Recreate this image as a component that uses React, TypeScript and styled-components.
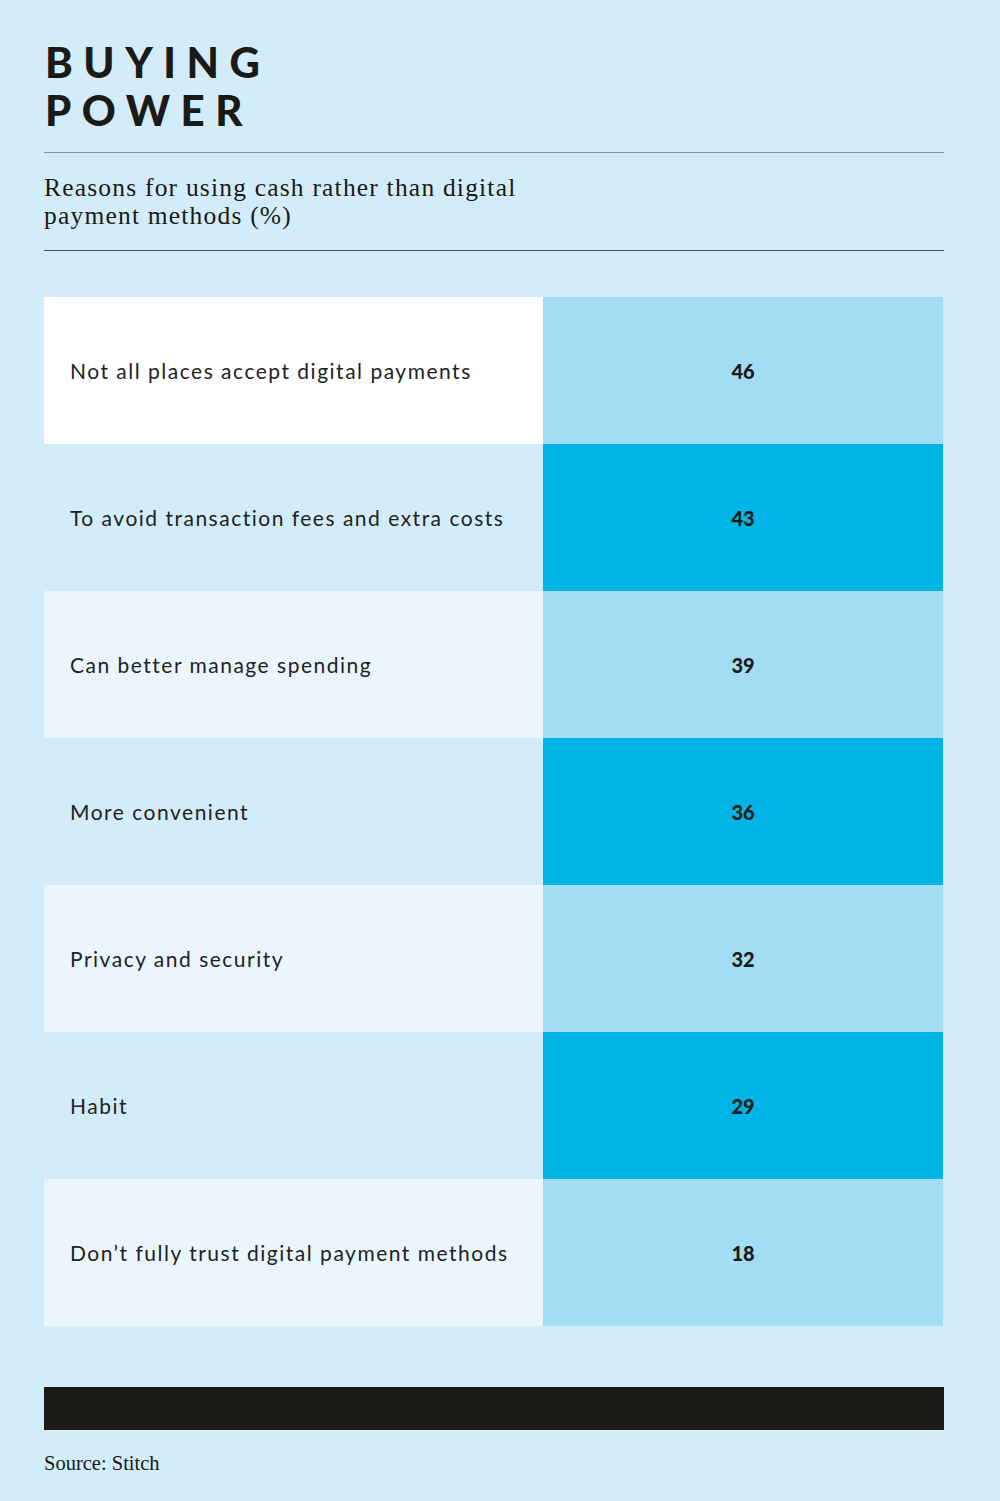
import React from 'react';
import styled, { createGlobalStyle } from 'styled-components';

const GlobalStyle = createGlobalStyle`
  html, body {
    margin: 0;
    padding: 0;
    background: #d2edf9;
  }
`;

const rows = [
  { label: 'Not all places accept digital payments', value: 46 },
  { label: 'To avoid transaction fees and extra costs', value: 43 },
  { label: 'Can better manage spending', value: 39 },
  { label: 'More convenient', value: 36 },
  { label: 'Privacy and security', value: 32 },
  { label: 'Habit', value: 29 },
  { label: 'Don’t fully trust digital payment methods', value: 18 },
];

const labelShades = ['#ffffff', '#d2edf9', '#eaf6fc', '#d2edf9', '#eaf6fc', '#d2edf9', '#eaf6fc'];

const Page = styled.div`
  width: 1000px;
  height: 1501px;
  box-sizing: border-box;
  padding: 38px 56px 0 44px;
  background: #d2edf9;
  color: #1a1a16;
`;

const Title = styled.h1`
  margin: 0 0 18px 1px;
  font-family: 'Lato', sans-serif;
  font-weight: 900;
  font-size: 42px;
  line-height: 48px;
  letter-spacing: 10.5px;
  text-transform: uppercase;
`;

const Rule = styled.hr<{ $dark?: boolean }>`
  margin: 0;
  border: 0;
  height: 1px;
  background: ${(p) => (p.$dark ? '#4a4f52' : '#8a9094')};
`;

const Subtitle = styled.p`
  margin: 0;
  padding: 21px 0 20px;
  font-family: 'Liberation Serif', serif;
  font-size: 25.5px;
  line-height: 28px;
  letter-spacing: 1.2px;
  max-width: 500px;
`;

const Table = styled.div`
  margin-top: 46px;
  display: grid;
  grid-template-columns: 499px 400px;
`;

const Label = styled.div<{ $shade: string }>`
  height: 147px;
  display: flex;
  align-items: center;
  padding-left: 26px;
  background: ${(p) => p.$shade};
  font-family: 'Lato', sans-serif;
  font-size: 21px;
  letter-spacing: 1.5px;
  color: #222;
`;

const Value = styled.div<{ $strong: boolean }>`
  height: 147px;
  display: flex;
  align-items: center;
  justify-content: center;
  background: ${(p) => (p.$strong ? '#00b5e6' : '#a3dcf5')};
  font-family: 'Lato', sans-serif;
  font-weight: 900;
  font-size: 20px;
`;

const Bar = styled.div`
  margin-top: 61px;
  height: 43px;
  background: #1a1a16;
`;

const Source = styled.p`
  margin: 22px 0 0;
  font-family: 'Liberation Serif', serif;
  font-size: 20.5px;
`;

export default function App() {
  return (
    <>
      <GlobalStyle />
      <Page>
        <Title>
          Buying
          <br />
          Power
        </Title>
        <Rule />
        <Subtitle>Reasons for using cash rather than digital payment methods (%)</Subtitle>
        <Rule $dark />
        <Table>
          {rows.map((r, i) => (
            <React.Fragment key={r.label}>
              <Label $shade={labelShades[i]}>{r.label}</Label>
              <Value $strong={i % 2 === 1}>{r.value}</Value>
            </React.Fragment>
          ))}
        </Table>
        <Bar />
        <Source>Source: Stitch</Source>
      </Page>
    </>
  );
}
